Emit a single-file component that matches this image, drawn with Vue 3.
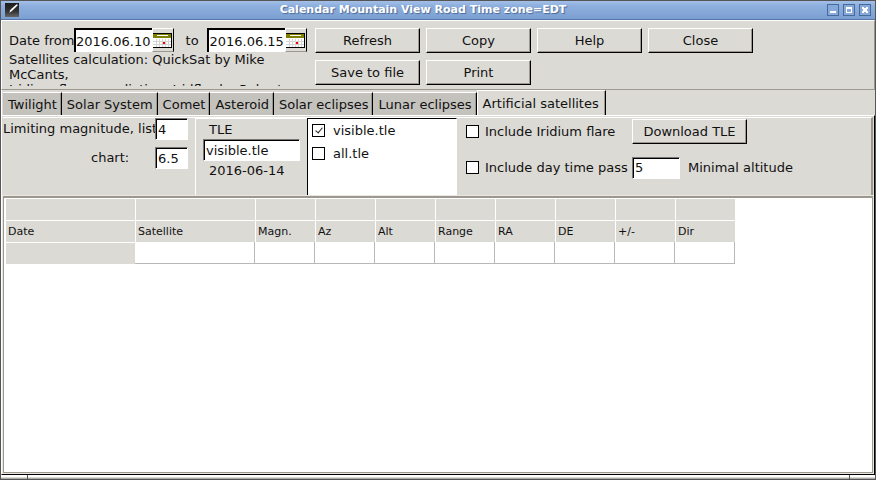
<script setup>
import { ref } from 'vue'

const dateFrom = ref('2016.06.10')
const dateTo = ref('2016.06.15')
const magList = ref('4')
const magChart = ref('6.5')
const tleFile = ref('visible.tle')
const altitude = ref('5')
const iridium = ref(false)
const dayPass = ref(false)
const files = ref([
  { name: 'visible.tle', checked: true },
  { name: 'all.tle', checked: false },
])
const actions = ['Refresh', 'Copy', 'Help', 'Close', 'Save to file', 'Print']
const tabs = ['Twilight', 'Solar System', 'Comet', 'Asteroid', 'Solar eclipses', 'Lunar eclipses', 'Artificial satellites']
const active = ref('Artificial satellites')
const columns = ['Date', 'Satellite', 'Magn.', 'Az', 'Alt', 'Range', 'RA', 'DE', '+/-', 'Dir']
</script>

<template>
  <div class="window">
    <header class="titlebar">
      <svg class="app-icon" viewBox="0 0 14 14" aria-hidden="true">
        <defs>
          <linearGradient id="sky" x1="0" y1="0" x2="0" y2="1">
            <stop offset="0" stop-color="#1c1c1c" />
            <stop offset="0.6" stop-color="#333" />
            <stop offset="1" stop-color="#666" />
          </linearGradient>
        </defs>
        <rect width="14" height="14" fill="url(#sky)" />
        <path d="M4 10 L6 6 L12 1 L13 2 L7 8 Z" fill="#aaa" />
        <path d="M5 8.500 L12 2" stroke="#fff" stroke-width="1.300" />
      </svg>
      <h1>Calendar Mountain View Road Time zone=EDT</h1>
      <div class="win-buttons">
        <button type="button" aria-label="Minimize">
          <svg viewBox="0 0 12 12"><path d="M3 7h6v2H3z" fill="#fff" /></svg>
        </button>
        <button type="button" aria-label="Maximize">
          <svg viewBox="0 0 12 12"><path d="M3 3h6v6H3zM4 5v3h4V5z" fill="#fff" fill-rule="evenodd" /></svg>
        </button>
        <button type="button" aria-label="Close window">
          <svg viewBox="0 0 12 12"><path d="M3 3h2v1h2V3h2v2H8v2h1v2H7V8H5v1H3V7h1V5H3z" fill="#fff" /></svg>
        </button>
      </div>
    </header>

    <section class="toolbar">
      <div class="period">
        <div class="dates">
          <label class="from" for="from">Date from</label>
          <input id="from" v-model="dateFrom" class="date" type="text" />
          <button class="pick" type="button" aria-label="Pick start date">
            <svg viewBox="0 0 19 15" shape-rendering="crispEdges"><path d="M0 0h19v15H0z" fill="#000" /><path d="M0 1h18v13H0z" fill="#fff" /><path d="M0 1h18v4H0z" fill="#808000" /><path d="M4 2h11v1H4z" fill="#fff" /><path d="M0 8h18v1H0zM0 11h18v1H0zM3 6h1v8H3zM6 6h1v8H6zM9 6h1v8H9zM12 6h1v8h-1zM15 6h1v8h-1z" fill="#d4d4d4" /><path d="M10 9h2v2h-2z" fill="#f00" /></svg>
          </button>
          <label class="until" for="to">to</label>
          <input id="to" v-model="dateTo" class="date" type="text" />
          <button class="pick" type="button" aria-label="Pick end date">
            <svg viewBox="0 0 19 15" shape-rendering="crispEdges"><path d="M0 0h19v15H0z" fill="#000" /><path d="M0 1h18v13H0z" fill="#fff" /><path d="M0 1h18v4H0z" fill="#808000" /><path d="M4 2h11v1H4z" fill="#fff" /><path d="M0 8h18v1H0zM0 11h18v1H0zM3 6h1v8H3zM6 6h1v8H6zM9 6h1v8H9zM12 6h1v8h-1zM15 6h1v8h-1z" fill="#d4d4d4" /><path d="M10 9h2v2h-2z" fill="#f00" /></svg>
          </button>
        </div>
        <p class="credits">Satellites calculation: QuickSat by Mike McCants,<br />Iridium flares prediction: Iridflar by Robert</p>
      </div>
      <div class="actions">
        <button v-for="a in actions" :key="a" class="btn" type="button">{{ a }}</button>
      </div>
    </section>

    <nav class="tabs" role="tablist">
      <button
        v-for="t in tabs"
        :key="t"
        type="button"
        role="tab"
        :aria-selected="t === active"
        :class="['tab', { active: t === active }]"
        @click="active = t"
      >{{ t }}</button>
    </nav>

    <main class="page">
      <div class="sheet">
        <section class="options">
          <div class="limits">
            <label class="lim" for="mlist">Limiting magnitude, list</label>
            <input id="mlist" v-model="magList" class="field" type="text" />
            <label class="lim chart" for="mchart">chart:</label>
            <input id="mchart" v-model="magChart" class="field" type="text" />
          </div>
          <div class="tle">
            <label for="tle">TLE</label>
            <input id="tle" v-model="tleFile" class="field" type="text" />
            <span>2016-06-14</span>
          </div>
          <div class="files">
            <label v-for="f in files" :key="f.name" class="check">
              <input v-model="f.checked" type="checkbox" />{{ f.name }}
            </label>
          </div>
          <div class="extras">
            <div class="line">
              <label class="check wide"><input v-model="iridium" type="checkbox" />Include Iridium flare</label>
              <button class="btn download" type="button">Download TLE</button>
            </div>
            <div class="line">
              <label class="check wide"><input v-model="dayPass" type="checkbox" />Include day time pass</label>
              <input id="alt" v-model="altitude" class="field alt" type="text" />
              <label for="alt">Minimal altitude</label>
            </div>
          </div>
        </section>

        <section class="grid">
          <table>
            <colgroup>
              <col class="c-date" />
              <col class="c-name" />
              <col v-for="n in 8" :key="n" class="c-num" />
            </colgroup>
            <thead>
              <tr><td v-for="c in columns" :key="c"></td></tr>
              <tr><th v-for="c in columns" :key="c" scope="col">{{ c }}</th></tr>
            </thead>
            <tbody>
              <tr><td v-for="c in columns" :key="c"></td></tr>
            </tbody>
          </table>
        </section>
      </div>
    </main>
    <footer class="status"><span></span><span></span><span></span></footer>
  </div>
</template>

<style>
body { background: #dcdad5; }
</style>

<style scoped>
* { box-sizing: border-box; }
.window {
  display: flex;
  flex-direction: column;
  min-height: 100vh;
  border: 1px solid #555;
  background: #dcdad5;
  color: #111;
  font: 13px/15px "DejaVu Sans", sans-serif;
}
button, input { font: inherit; color: inherit; margin: 0; border-radius: 0; }
input { min-width: 0; }
svg { display: block; }

.titlebar {
  display: flex;
  align-items: center;
  height: 19px;
  padding: 0 4px;
  background: linear-gradient(#a4c0e8, #8fb0de 25%, #7a9fd1);
  border-bottom: 1px solid #5674a5;
}
.app-icon { width: 14px; height: 14px; }
h1 {
  flex: 1;
  margin: 0;
  text-align: center;
  font-size: 11px;
  line-height: 16px;
  font-weight: bold;
  color: #fff;
  text-shadow: 1px 1px 1px #4a6a99;
}
.win-buttons { display: flex; gap: 4px; }
.win-buttons button {
  width: 12px;
  height: 12px;
  padding: 0;
  border: 0;
  outline: 1px solid #456a9c;
  outline-offset: -1px;
  background: #86a9d9;
}

.toolbar {
  display: flex;
  gap: 8px;
  height: 70px;
  padding: 7px 7px 3px;
  border: 1px solid #fff;
  border-right-color: #9c978f;
  border-bottom-color: #9c978f;
}
.period { width: 298px; flex: none; overflow: hidden; }
.dates { display: flex; align-items: center; height: 24px; }
.from { width: 65px; white-space: nowrap; }
.until { width: 34px; padding-left: 12px; }
.date {
  width: 78px;
  height: 24px;
  padding: 0;
  border: solid #000;
  border-width: 2px 0 0 2px;
  background: #fff;
}
.pick {
  display: flex;
  align-items: center;
  width: 22px;
  height: 24px;
  padding: 0;
  border: 1px solid #fff;
  border-right-color: #000;
  border-bottom-color: #9c978f;
  background: #dcdad5;
}
.pick svg { width: 19px; height: 15px; }
.credits { margin: 0; height: 34px; overflow: hidden; }
.actions {
  display: grid;
  grid-template-columns: repeat(4, 105px);
  grid-auto-rows: 25px;
  gap: 7px 6px;
}
.btn {
  padding: 0;
  border: 1px solid #fff;
  border-right-color: #000;
  border-bottom-color: #000;
  box-shadow: inset -1px -1px #9c978f;
  background: #dcdad5;
}

.tabs { display: flex; align-items: flex-end; height: 25px; padding-left: 1px; border-left: 1px solid #fff; }
.tab {
  height: 23px;
  padding: 0 4px 0 5px;
  border: solid #fff;
  border-width: 1px 1px 0 0;
  border-right-color: #000;
  box-shadow: inset -1px 0 #9c978f;
  background: #c4c2bd;
  white-space: nowrap;
}
.tab.active {
  height: 25px;
  padding: 0 6px 0 5px;
  border-left: 1px solid #fff;
  background: #dcdad5;
}

.page {
  display: flex;
  flex: 1;
  padding: 1px;
  border: 1px solid #fff;
  border-right-color: #000;
  border-bottom-color: #000;
}
.sheet { display: flex; flex-direction: column; flex: 1; min-width: 0; }
.options {
  display: flex;
  height: 79px;
  border: solid #fff;
  border-width: 1px 2px 0 0;
  border-right-color: #9c978f;
}
.limits {
  display: grid;
  grid-template-columns: 152px 33px;
  grid-auto-rows: 22px;
  row-gap: 7px;
  width: 192px;
  flex: none;
}
.lim { overflow: hidden; white-space: nowrap; line-height: 22px; }
.chart { padding-left: 88px; }
.field {
  height: 22px;
  padding: 0 2px;
  border: 1px solid #fff;
  border-top-color: #777;
  border-left-color: #777;
  box-shadow: inset 1px 1px #000;
  background: #fff;
}
.tle {
  display: flex;
  flex-direction: column;
  width: 112px;
  flex: none;
  padding: 1px 7px;
  border-left: 1px solid #fff;
  border-top: 1px solid #fff;
}
.tle label { padding-left: 6px; line-height: 19px; }
.tle span { padding-left: 6px; line-height: 19px; }
.files {
  width: 150px;
  flex: none;
  padding: 0 4px;
  border: 1px solid #fff;
  border-top-color: #000;
  border-left-color: #000;
  background: #fff;
}
.check { display: flex; align-items: center; gap: 8px; height: 23px; white-space: nowrap; }
.check input {
  appearance: none;
  width: 13px;
  height: 13px;
  border: 1px solid #000;
  background: #fff;
}
.check input:checked::after {
  content: "";
  display: block;
  width: 3px;
  height: 6px;
  margin: 1px 0 0 4px;
  border: solid #222;
  border-width: 0 1px 1px 0;
  transform: rotate(40deg);
}
.extras { display: flex; flex-direction: column; gap: 11px; padding: 1px 0 0 9px; }
.line { display: flex; align-items: center; height: 25px; }
.wide { width: 166px; gap: 6px; }
.download { width: 115px; height: 25px; }
.alt { width: 48px; margin-right: 8px; }

.grid {
  flex: 1;
  padding: 0 1px;
  border: 1px solid #9c978f;
  border-top-width: 2px;
  outline: 1px solid #e8e6e1;
  background: #fff;
  overflow: auto;
}
table { border-collapse: separate; border-spacing: 0; table-layout: fixed; width: 730px; font-size: 11px; }
.c-date { width: 130px; }
.c-name { width: 120px; }
.c-num { width: 60px; }
th, td { height: 22px; padding: 0 2px; text-align: left; font-weight: normal; line-height: 15px; }
thead th, thead td, tbody td:first-child {
  border: solid #fff;
  border-width: 1px 0 0 1px;
  background: #dcdad5;
}
tbody td:not(:first-child) { border: solid #b8b8b8; border-width: 0 1px 1px 0; }

.status { display: grid; grid-template-columns: 26px 1fr 25px; height: 4px; gap: 1px; background: #555; }
.status span { border-top: 2px solid #fff; border-bottom: 1px solid #aaa; background: #dcdad5; }
</style>
